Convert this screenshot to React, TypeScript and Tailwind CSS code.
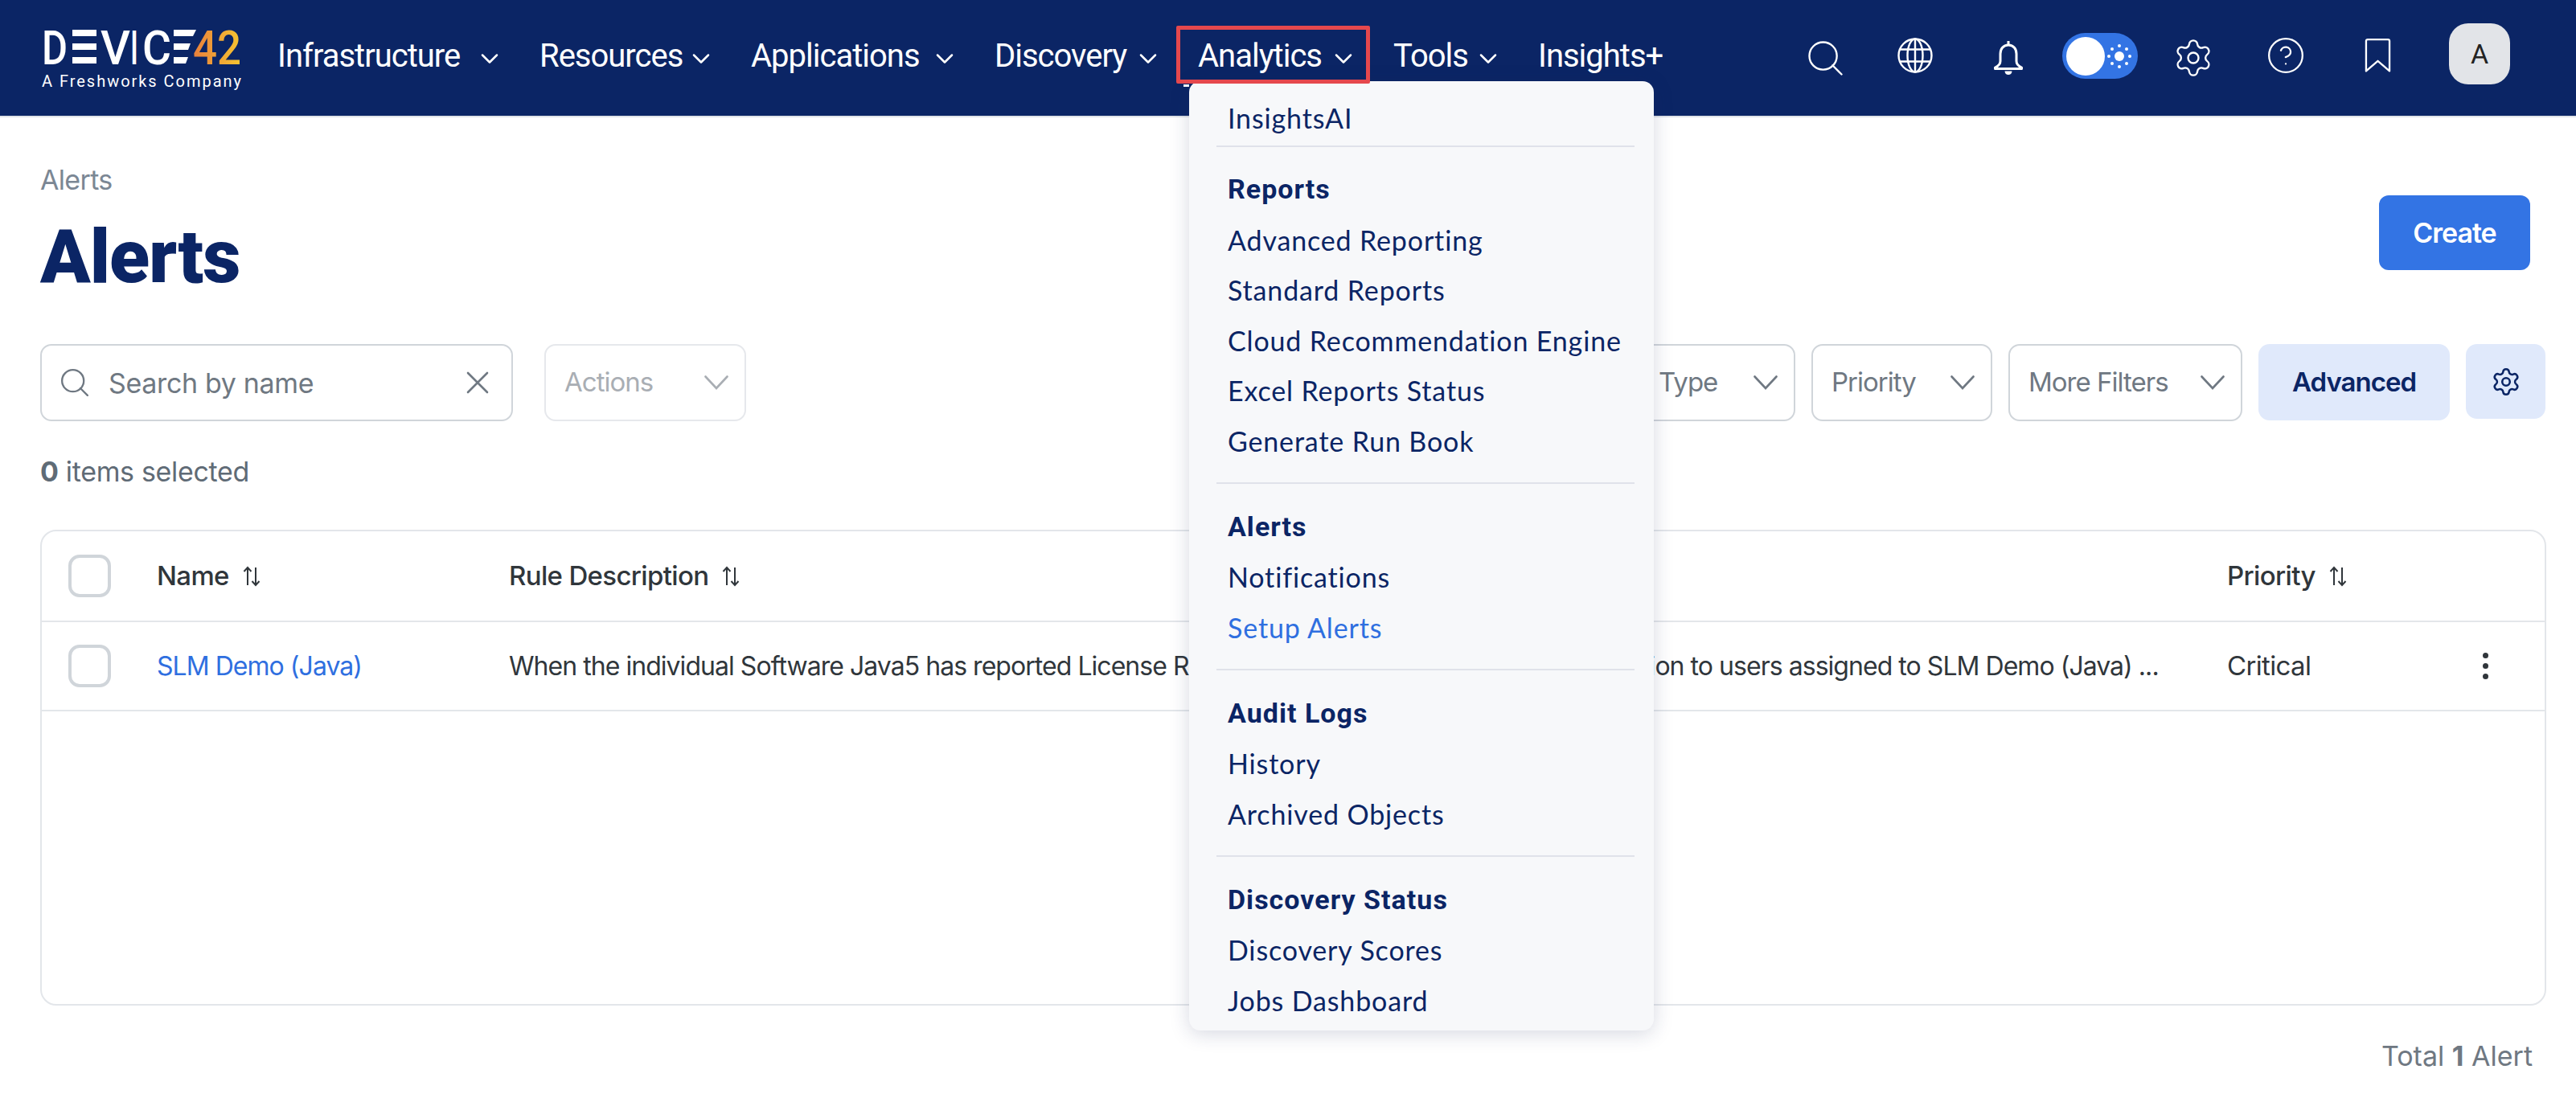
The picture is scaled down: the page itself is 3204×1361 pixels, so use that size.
import React from 'react';
import { ChevronDown, CircleHelp, Settings } from 'lucide-react';

const NAV = [
  { label: 'Infrastructure', width: 'w-[282px]', caret: true },
  { label: 'Resources', width: 'w-[219px]', caret: true },
  { label: 'Applications', width: 'w-[259px]', caret: true },
  { label: 'Discovery', width: 'w-[209px]', caret: true },
  { label: 'Analytics', width: 'w-[199px]', caret: true, marked: true },
  { label: 'Tools', width: 'w-[136px]', caret: true },
  { label: 'Insights+', width: 'w-auto', caret: false },
];

const MENU = [
  { items: ['InsightsAI'] },
  { title: 'Reports', items: ['Advanced Reporting', 'Standard Reports', 'Cloud Recommendation Engine', 'Excel Reports Status', 'Generate Run Book'] },
  { title: 'Alerts', items: ['Notifications', 'Setup Alerts'] },
  { title: 'Audit Logs', items: ['History', 'Archived Objects'] },
  { title: 'Discovery Status', items: ['Discovery Scores', 'Jobs Dashboard'] },
];

const Logo = () => (
  <svg width="260" height="110" viewBox="0 -20 260 110" className="block">
    <defs>
      <linearGradient id="d42" x1="0" x2="1" y1="0" y2="0">
        <stop offset="0" stopColor="#e87f3c" />
        <stop offset="1" stopColor="#f6c531" />
      </linearGradient>
    </defs>
    <g fill="#fff" fontFamily="Roboto, sans-serif" fontSize="60" fontWeight="500">
      <text x="2" y="44" textLength="32" lengthAdjust="spacingAndGlyphs">D</text>
      <rect x="40" y="1" width="30" height="8" />
      <rect x="40" y="18" width="30" height="8" />
      <rect x="40" y="35" width="30" height="8" />
      <text x="75" y="44" textLength="37" lengthAdjust="spacingAndGlyphs">V</text>
      <text x="112" y="44" textLength="10" lengthAdjust="spacingAndGlyphs">I</text>
      <text x="127" y="44" textLength="36" lengthAdjust="spacingAndGlyphs">C</text>
      <polygon points="166,1 194,1 190,9 166,9" />
      <polygon points="166,18 187,18 184,26 166,26" />
      <polygon points="166,35 184,35 181,43 166,43" />
    </g>
    <text x="190" y="44" textLength="60" lengthAdjust="spacingAndGlyphs" fontFamily="Roboto, sans-serif" fontSize="60" fontWeight="500" fill="url(#d42)">42</text>
    <text x="2" y="72" textLength="248" fill="#fff" fontFamily="Roboto, sans-serif" fontSize="20">A Freshworks Company</text>
  </svg>
);

const Globe = () => (
  <svg width="44" height="44" viewBox="0 0 44 44" fill="none" stroke="#fff" strokeWidth="2.4">
    <circle cx="22" cy="22" r="20.5" />
    <ellipse cx="22" cy="22" rx="9.5" ry="20.5" />
    <path d="M3.5 14.5h37M3.5 29.5h37M22 1.5v41" />
  </svg>
);

const Bell = () => (
  <svg width="38" height="44" viewBox="2 0 36 44" fill="none" stroke="#fff" strokeWidth="3" strokeLinejoin="round">
    <path d="M20 1v5M20 6c-6.500 0-10 5-10 11v9c0 3-2 6-6.500 8v1.500h33V34c-4.500-2-6.500-5-6.500-8v-9c0-6-3.500-11-10-11z" />
    <path d="M15.500 38.500h9c0 6-9 6-9 0z" fill="#fff" stroke="none" />
  </svg>
);

const Bookmark = () => (
  <svg width="33" height="44" viewBox="0 0 34 44" fill="none" stroke="#fff" strokeWidth="2.4" strokeLinejoin="round">
    <path d="M2 3.500a2 2 0 0 1 2-2h26a2 2 0 0 1 2 2V42L17 29 2 42z" />
  </svg>
);

const SearchGlyph = ({ size, color, width }: { size: number; color: string; width: number }) => (
  <svg width={size} height={size} viewBox="0 0 44 44" fill="none" stroke={color} strokeWidth={width} strokeLinecap="round">
    <circle cx="19" cy="19" r="17.500" />
    <path d="M31 31l11.500 11.500" />
  </svg>
);

const SortGlyph = () => (
  <svg width="24" height="26" viewBox="0 0 24 26" fill="none" stroke="#30363b" strokeWidth="2" className="ml-[16px]">
    <path d="M7 24V2M2.500 7L7 2l4.500 5" />
    <path d="M17 2v22M12.500 19l4.500 5 4.500-5" />
  </svg>
);

const Sun = () => (
  <svg width="30" height="30" viewBox="0 0 30 30" fill="#fff">
    <circle cx="15" cy="15" r="6" />
    {[[15, 2], [15, 28], [2, 15], [28, 15], [6, 6], [24, 6], [6, 24], [24, 24]].map(([x, y], i) => (
      <circle key={i} cx={x} cy={y} r="2" />
    ))}
  </svg>
);

const Select = ({ label, width, muted }: { label: string; width: string; muted?: boolean }) => (
  <div className={`${width} h-full rounded-[14px] border-2 ${muted ? 'border-[#e6e8ec] text-[#a9aeb4]' : 'border-[#d0d5da] text-[#6f7882]'} flex items-center justify-between pl-[23px] pr-[20px] text-[33px] font-['Inter'] tracking-[-0.03em]`}>
    <span className="whitespace-nowrap">{label}</span>
    <svg width="30" height="18" viewBox="0 0 30 18" fill="none" stroke="currentColor" strokeWidth="2.600" strokeLinecap="round"><path d="M1.500 1.500L15 16 28.500 1.500" /></svg>
  </div>
);

const Checkbox = () => <div className="w-[53px] h-[53px] rounded-[14px] border-[4px] border-[#d0d5da] bg-white" />;

const Head = ({ label }: { label: string }) => (
  <div className="flex items-center text-[33px] font-medium text-[#30363b] font-['Inter'] tracking-[-0.02em]">
    {label}
    <SortGlyph />
  </div>
);

export default function App() {
  return (
    <div className="relative h-[1361px] w-[3204px] overflow-hidden bg-white font-['Inter',sans-serif]">
      <header className="h-[146px] border-b-2 border-[#dfe3e8] bg-[#0b2565] flex items-start">
        <div className="pl-[50px] pt-[16px] w-[345px] shrink-0"><Logo /></div>
        <nav className="flex h-[140px] items-center">
          {NAV.map(item => (
            <div key={item.label} className={`relative flex items-center justify-between mr-[44px] text-white text-[40px] font-['Roboto'] tracking-[-0.025em] ${item.width}`}>
              {item.label}
              {item.caret && <ChevronDown size={36} strokeWidth={1.700} className="mt-[6px] shrink-0" />}
              {item.marked && <div className="absolute z-10 left-[-27px] top-[-8px] w-[241px] h-[72px] border-[5px] border-[#e5484d] rounded-[2px]" />}
            </div>
          ))}
        </nav>
        <div className="ml-auto h-[144px] flex items-center pr-[82px]">
          <SearchGlyph size={43} color="#fff" width={2.4} />
          <div className="ml-[68px] -mt-[6px]"><Globe /></div>
          <div className="ml-[75px]"><Bell /></div>
          <div className="ml-[48px] -mt-[5px] w-[94px] h-[57px] rounded-full bg-[#3374e4] flex items-center justify-between pl-[5px] pr-[8px]">
            <div className="w-[48px] h-[48px] rounded-full bg-white" />
            <Sun />
          </div>
          <div className="ml-[48px] w-[41px] flex justify-center"><Settings size={52} strokeWidth={1.100} color="#fff" className="shrink-0" /></div>
          <div className="ml-[73px] -mt-[6px] w-[43px] flex justify-center"><CircleHelp size={50} strokeWidth={1.100} color="#fff" className="shrink-0" /></div>
          <div className="ml-[77px] -mt-[6px]"><Bookmark /></div>
          <div className="ml-[72px] -mt-[10px] w-[76px] h-[76px] rounded-[24px] bg-[#e2e4e8] text-[#222] text-[34px] font-['Roboto'] flex items-center justify-center">A</div>
        </div>
      </header>

      <main className="pl-[50px] pr-[37px]">
        <div className="h-[282px] pt-[62px] flex items-start justify-between">
          <div>
            <div className="text-[34px] leading-[32px] text-[#7b8794] font-['Inter'] tracking-[-0.02em]">Alerts</div>
            <h1 className="mt-[34px] text-[92px] leading-[92px] font-black text-[#0b2565] font-['Roboto'] tracking-[-0.01em]">Alerts</h1>
          </div>
          <button className="mt-[35px] mr-[20px] w-[188px] h-[93px] rounded-[12px] bg-[#3374e4] text-white text-[34px] font-semibold font-['Inter'] tracking-[-0.03em]">Create</button>
        </div>

        <div className="h-[96px] mr-[1px] flex justify-between">
          <div className="flex gap-[39px]">
            <div className="w-[588px] h-full rounded-[14px] border-2 border-[#d0d5da] flex items-center pl-[24px] pr-[28px] text-[#6f7882]">
              <SearchGlyph size={34} color="#6f7882" width={3} />
              <span className="ml-[25px] text-[34px] font-['Inter'] tracking-[-0.01em]">Search by name</span>
              <svg width="28" height="28" viewBox="0 0 28 28" className="ml-auto" fill="none" stroke="#6f7882" strokeWidth="2.600" strokeLinecap="round"><path d="M2 2l24 24M26 2L2 26" /></svg>
            </div>
            <Select label="Actions" width="w-[251px]" muted />
          </div>
          <div className="flex gap-[20px]">
            <Select label="Alert Type" width="w-[272px]" />
            <Select label="Priority" width="w-[225px]" />
            <Select label="More Filters" width="w-[291px]" />
            <button className="w-[238px] h-[95px] rounded-[14px] bg-[#e0e9fb] text-[#0b2565] text-[33px] font-semibold font-['Inter'] tracking-[-0.03em]">Advanced</button>
            <button className="w-[99px] h-[93px] rounded-[14px] bg-[#e0e9fb] flex items-center justify-center"><Settings size={38} strokeWidth={1.600} color="#0b2565" /></button>
          </div>
        </div>

        <div className="mt-[45px] text-[34px] leading-[36px] text-[#5f6b76] font-['Inter'] tracking-[-0.01em]"><b>0</b> items selected</div>

        <div className="mt-[54px] h-[592px] rounded-[20px] border-2 border-[#e3e6ea]">
          <div className="h-[113px] grid grid-cols-[143px_438px_2137px_300px_42px] items-center border-b-2 border-[#e3e6ea]">
            <div className="pl-[33px]"><Checkbox /></div>
            <Head label="Name" />
            <Head label="Rule Description" />
            <Head label="Priority" />
            <div />
          </div>
          <div className="h-[111px] grid grid-cols-[143px_438px_2137px_300px_42px] items-center border-b-2 border-[#e3e6ea] text-[32px] text-[#30363b] font-['Inter'] tracking-[-0.03em]">
            <div className="pl-[33px]"><Checkbox /></div>
            <div className="text-[#2f6fe0]">SLM Demo (Java)</div>
            <div className="whitespace-nowrap overflow-hidden">When the individual Software Java5 has reported License Rule violation counts, send a mail notification to users assigned to SLM Demo (Java) ...</div>
            <div className="text-[33px] tracking-[-0.02em]">Critical</div>
            <div className="flex flex-col items-center gap-[6px]">
              <span className="w-[7px] h-[7px] rounded-full bg-[#30363b]" />
              <span className="w-[7px] h-[7px] rounded-full bg-[#30363b]" />
              <span className="w-[7px] h-[7px] rounded-full bg-[#30363b]" />
            </div>
          </div>
        </div>

        <div className="mt-[45px] pr-[17px] text-right text-[34px] leading-[36px] text-[#6f7882] font-['Inter']">Total <b>1</b> Alert</div>
      </main>

      {/* dropdown that hangs from the Analytics item */}
      <div className="absolute left-[1472px] top-[105px] w-[7px] h-[3px] bg-white" />
      <div className="absolute left-[1479px] top-[101px] w-[578px] h-[1181px] rounded-[14px] bg-[#f7f8fa] shadow-[0_4px_24px_rgba(30,40,90,0.18)] pl-[34px] pr-[24px] overflow-hidden text-[#0b2565]">
        {MENU.map((group, g) => (
          <div key={g} className={g === 0 ? 'pt-[14px] pb-[3px]' : 'border-t-2 border-[#e0e2ea] pt-[22px] pb-[20.5px]'}>
            {group.title && <div className="pl-[14px] h-[62.5px] flex items-center text-[34px] font-bold font-['Roboto'] tracking-[0.03em]">{group.title}</div>}
            {group.items.map(label => (
              <div key={label} className={`pl-[14px] h-[62.5px] flex items-center text-[34px] font-['Lato'] tracking-[0.025em] ${label === 'Setup Alerts' ? 'text-[#2f6fe0]' : ''}`}>{label}</div>
            ))}
          </div>
        ))}
      </div>
    </div>
  );
}
